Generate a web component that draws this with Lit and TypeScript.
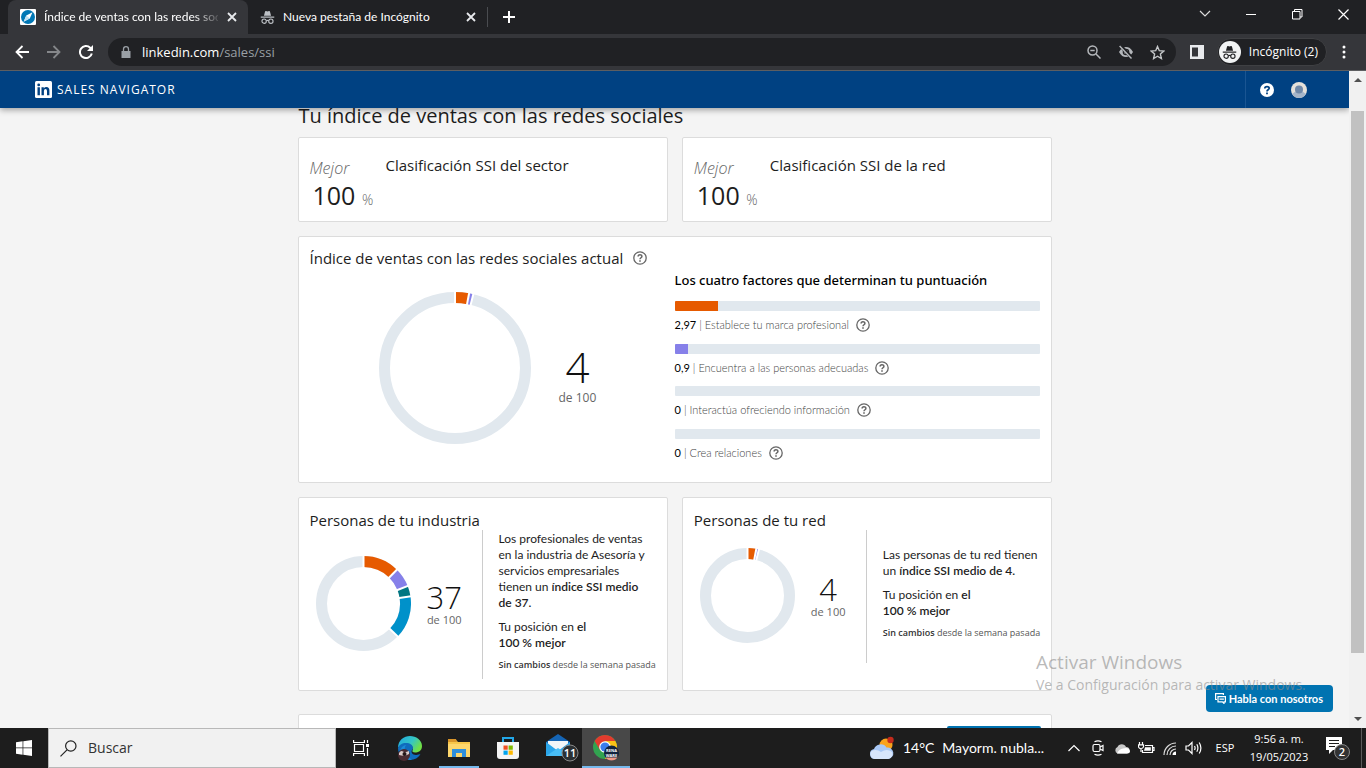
import { LitElement, html, svg, css, nothing } from "lit";
import { customElement, property } from "lit/decorators.js";
import { styleMap } from "lit/directives/style-map.js";

interface Segment {
  value: number;
  color: string;
}

const ORANGE = "#e65a00";
const PURPLE = "#8680e9";
const TEAL = "#007682";
const BLUE = "#0091ca";

/* Ring chart of coloured shares out of one hundred */
@customElement("ssi-ring")
export class SsiRing extends LitElement {
  @property({ type: Number }) size = 95;
  @property({ attribute: false }) segments: Segment[] = [];

  static styles = css`
    :host { display: block; flex: none; }
    svg { display: block; }
  `;

  render() {
    const c = this.size / 2;
    const r = c - 5.5;
    const at = (pct: number, radius: number) => {
      const a = (pct / 100) * Math.PI * 2;
      return [c + radius * Math.sin(a), c - radius * Math.cos(a)];
    };
    let start = 0;
    const bounds = [0];
    const arcs = this.segments.map((s) => {
      const [x1, y1] = at(start, r);
      const [x2, y2] = at(start + s.value, r);
      start += s.value;
      bounds.push(start);
      return svg`<path d="M${x1} ${y1}A${r} ${r} 0 0 1 ${x2} ${y2}" stroke=${s.color} stroke-width="11" fill="none"/>`;
    });
    return html`<svg width=${this.size} height=${this.size} role="img" aria-label="SSI">
      <circle cx=${c} cy=${c} r=${r} fill="none" stroke="#e1e8ee" stroke-width="11"/>
      ${arcs}
      ${bounds.map((b) => {
        const [x1, y1] = at(b, c - 13);
        const [x2, y2] = at(b, c + 1);
        return svg`<line x1=${x1} y1=${y1} x2=${x2} y2=${y2} stroke="#fff" stroke-width="2"/>`;
      })}
    </svg>`;
  }
}

const helpIcon = html`<svg width="14" height="14" viewBox="0 0 14 14" fill="none" stroke="#666" stroke-width="1.3" aria-hidden="true">
  <circle cx="7" cy="7" r="6.2"/><path d="M5.1 5.6C5.1 3.3 8.9 3.3 8.9 5.4 8.9 6.8 7 6.7 7 8.3" stroke-width="1.5"/><path d="M7 9.3v1.5" stroke-width="1.6"/></svg>`;

const closeIcon = html`<svg width="10" height="10" viewBox="0 0 10 10" stroke="#e8eaed" stroke-width="1.8"><path d="M1 1l8 8M9 1L1 9"/></svg>`;

const spy = (color: string, size: number) => html`<svg width=${size} height=${size} viewBox="0 0 16 16" fill="none" stroke=${color}>
  <path d="M4.2 6.2L5.4 1.6Q5.7.9 6.4 1.1L8 1.5 9.6 1.1Q10.3.9 10.6 1.6L11.8 6.2Z" fill=${color} stroke="none"/>
  <path d="M.8 7.6h14.4" stroke-width="1.3"/>
  <circle cx="4.4" cy="11.9" r="2.3" stroke-width="1.2"/><circle cx="11.6" cy="11.9" r="2.3" stroke-width="1.2"/>
  <path d="M6.7 11.5Q8 10.6 9.3 11.5" stroke-width="1.2"/></svg>`;

const factors = [
  { score: "2,97", value: 2.97, label: "Establece tu marca profesional", color: ORANGE },
  { score: "0,9", value: 0.9, label: "Encuentra a las personas adecuadas", color: PURPLE },
  { score: "0", value: 0, label: "Interactúa ofreciendo información", color: TEAL },
  { score: "0", value: 0, label: "Crea relaciones", color: BLUE },
];

@customElement("app-root")
export class AppRoot extends LitElement {
  static styles = css`
    :host {
      display: flex;
      flex-direction: column;
      height: 100vh;
      overflow: hidden;
      position: relative;
      font-family: "Open Sans", "Noto Sans", sans-serif;
      font-size: 12px;
      line-height: 16px;
      color: #1d1d1d;
    }
    * { box-sizing: border-box; }
    button { border: 0; background: none; padding: 0; margin: 0; font: inherit; color: inherit; display: grid; place-items: center; flex: none; }
    svg { display: block; flex: none; }
    h1, h2, h3, p { margin: 0; font-weight: 400; }
    b { font-weight: 600; }
    .light { font-weight: 300; }

    .tabs { height: 34px; flex: none; background: #202124; display: flex; padding-left: 8px; color: #fff; font-family: Lato, sans-serif; }
    .tab { width: 239px; display: flex; align-items: center; padding: 0 10px 0 12px; gap: 8px; }
    .tab.active { width: 240px; background: #35363a; border-radius: 8px 8px 0 0; }
    .tab-title { flex: 1; white-space: nowrap; overflow: hidden; }
    .tab.active .tab-title { -webkit-mask-image: linear-gradient(90deg, #000 150px, transparent 178px); mask-image: linear-gradient(90deg, #000 150px, transparent 178px); }
    .tab-close { width: 12px; height: 16px; }
    .tab-rule { width: 1px; height: 20px; align-self: center; background: #4a4c50; }
    .new-tab { width: 42px; }
    .win { margin-left: auto; display: flex; }
    .win button { width: 46px; height: 28px; }

    .toolbar { height: 37px; flex: none; background: #35363a; border-bottom: 1px solid #5d5e61; display: flex; align-items: center; padding: 0 5px 0 6px; color: #e8eaed; }
    .nav-btn { width: 32px; height: 28px; }
    .omni { flex: 1; height: 28px; border-radius: 14px; background: #202124; margin-left: 6px; display: flex; align-items: center; padding: 0 2px 0 12px; }
    .omni-text { flex: 1; font-size: 13px; padding-left: 10px; color: #9aa0a6; }
    .omni-text b { font-weight: 400; color: #fff; }
    .side { width: 41px; height: 28px; padding-left: 2px; }
    .private { display: flex; align-items: center; gap: 8px; height: 28px; border-radius: 14px; background: #202124; border: 1px solid #3f4043; padding: 0 8px 0 1px; color: #fff; }
    .disc { width: 22px; height: 22px; border-radius: 50%; background: #f1f3f4; display: grid; place-items: center; }
    .dots { width: 34px; height: 28px; }

    .view { flex: 1; min-height: 0; display: flex; }
    .page { flex: 1; min-width: 0; background: #f4f4f4; overflow: hidden; position: relative; }
    .brand { height: 37px; background: #004182; color: #fff; display: flex; align-items: center; padding-left: 35px; gap: 5px; position: relative; z-index: 1; box-shadow: 0 2px 6px rgba(0, 0, 0, 0.35); }
    .brand-name { letter-spacing: 1px; font-size: 12px; }
    .brand-end { margin-left: auto; height: 37px; border-left: 1px solid #1a5592; display: flex; align-items: center; padding: 0 42px 0 14px; gap: 17px; }

    .content { max-width: 754px; margin: -6px auto 0; display: grid; gap: 14px; }
    .title { font-size: 20px; line-height: 28px; padding-left: 1px; margin-bottom: -7px; }
    .pair { display: grid; grid-template-columns: 1fr 1fr; gap: 14px; }
    .card { background: #fff; border: 1px solid #dcdcdc; border-radius: 2px; }
    .h { font-size: 15px; line-height: 20px; }

    .rank { display: flex; padding: 17px 11px 8px; min-height: 85px; gap: 10px; }
    .best { width: 66px; flex: none; padding-top: 3px; }
    .best i { display: block; font-size: 16px; line-height: 21px; color: #666; }
    .best p { font-size: 25px; line-height: 32px; padding-left: 3px; white-space: nowrap; }
    .best small { font-size: 14px; line-height: 16px; color: #666; }

    .current { display: grid; grid-template-columns: 365px 1fr; padding: 11px 11px 11px; min-height: 247px; }
    .with-help { display: flex; align-items: center; gap: 10px; }
    .ring-row { display: flex; align-items: flex-end; padding: 24px 0 0 69px; gap: 28px; }
    .score { text-align: center; color: #666; font-size: 12px; line-height: 16px; }
    .score strong { display: block; font-weight: 300; font-size: 42px; line-height: 46px; color: #111; }
    .score.big { padding-bottom: 38px; }
    .score.mini { font-size: 11px; }
    .score.mini strong { font-size: 31px; line-height: 30px; }
    .factors { padding-top: 22px; display: grid; grid-template-rows: 31px 170px; }
    .factors h3 { font-family: "Noto Sans", sans-serif; font-size: 13px; line-height: 20px; font-weight: 500; color: #000; }
    .factor-list { display: grid; grid-auto-rows: 1fr; }
    .bar { height: 10px; border-radius: 1px; background: #e1e8ee; overflow: hidden; }
    .fill { height: 10px; }
    .factor { display: flex; align-items: center; padding-top: 6px; font-family: Lato, sans-serif; font-size: 11px; line-height: 16px; color: #444; white-space: pre; }
    .factor b { font-weight: 400; color: #000; }
    .factor button { margin-left: 7px; }

    .people { padding: 12px 11px 11px; min-height: 194px; display: grid; grid-template: 20px 1fr / 173px 1fr; }
    .people .h { grid-column: 1 / -1; }
    .people-left { display: flex; align-items: center; padding: 0 0 3px 6px; gap: 16px; border-right: 1px solid #ccc; }
    .people-left.short { margin-bottom: 16px; }
    .people-left .score { padding-top: 4px; }
    .say { padding: 0 0 8px 16px; display: grid; gap: 8px; align-content: center; font-family: Lato, sans-serif; }
    .say p { padding-right: 6px; }
    .say small { font-family: "Open Sans", sans-serif; font-size: 9px; line-height: 12px; color: #555; white-space: nowrap; }
    .say small b { color: #333; }
    .say.short { padding-bottom: 24px; }
    .say.short p { padding-right: 0; }
    .next { height: 60px; margin-top: 9px; padding: 11px 10px 0; display: flex; justify-content: flex-end; }
    .next button { width: 94px; height: 32px; border-radius: 2px; background: #0073b1; }

    .scroll { width: 17px; background: #f1f1f1; display: flex; flex-direction: column; align-items: center; justify-content: space-between; padding: 6px 0; }
    .thumb { width: 13px; flex: 1; background: #c1c1c1; margin: 29px 0 64px; }
    .chat { position: absolute; right: 16px; bottom: 16px; display: flex; align-items: center; gap: 3px; height: 27px; padding: 0 10px 0 9px; border-radius: 4px; background: #0073b1; color: #fff; font-family: Lato, sans-serif; font-size: 11px; font-weight: 700; z-index: 2; }
    .mark { position: absolute; right: 55px; bottom: 73px; width: 275px; color: rgba(140, 140, 140, 0.6); z-index: 3; white-space: nowrap; pointer-events: none; }
    .mark p { font-size: 14px; line-height: 20px; }
    .mark .lead { font-size: 19px; line-height: 26px; }

    .taskbar { height: 40px; flex: none; background: #1d1d1d; color: #fff; display: flex; align-items: stretch; }
    .taskbar button { width: 48px; height: 40px; }
    .search { width: 288px; border: 1px solid #b8b8b8; background: #f1f1f1; display: flex; align-items: center; padding-left: 11px; gap: 11px; }
    .search input { border: 0; background: none; outline: 0; flex: 1; min-width: 0; font: inherit; font-size: 14px; padding: 0; }
    .search input::placeholder { color: #333; opacity: 1; }
    .apps { display: flex; gap: 1px; padding-left: 1px; }
    .apps .open { border-bottom: 2px solid #76b9ed; width: 40px; margin: 0 4px; padding-top: 2px; }
    .apps .current-app { background: #484848; border-bottom: 2px solid #76b9ed; padding-top: 2px; }
    .tray { margin-left: auto; display: flex; align-items: center; }
    .taskbar .weather { width: auto; display: flex; gap: 8px; font-family: Lato, sans-serif; font-size: 14px; padding-right: 18px; }
    .taskbar .tray-btn { width: 24px; }
    .taskbar .lang { width: 38px; font-size: 11px; }
    .taskbar .clock { width: 70px; font-size: 11px; line-height: 18px; text-align: center; }
    .taskbar .notes { width: 48px; margin-right: 4px; border-right: 1px solid #5a5a5a; }
  `;

  private help(label: string) {
    return html`<button aria-label=${label}>${helpIcon}</button>`;
  }

  private rank(title: string) {
    return html`<section class="card rank">
      <div class="best"><i class="light">Mejor</i><p>100 <small class="light">%</small></p></div>
      <h2 class="h">${title}</h2>
    </section>`;
  }

  private browser() {
    return html`<header class="tabs">
      <div class="tab active">
        <svg width="16" height="16" viewBox="0 0 16 16"><rect width="16" height="16" rx="1" fill="#fff"/><circle cx="8" cy="8" r="7" fill="#0077b5"/><path d="M12.500 3.200L9.800 9.600 3.600 12.700 6.300 6.600Z" fill="#fff"/><path d="M6.300 6.600L9.800 9.600 3.600 12.700z" fill="#bfe0f2"/></svg>
        <span class="tab-title">Índice de ventas con las redes sociales</span>
        <button class="tab-close" aria-label="Cerrar">${closeIcon}</button>
      </div>
      <div class="tab">${spy("#bdc1c6", 15)}
        <span class="tab-title">Nueva pestaña de Incógnito</span>
        <button class="tab-close" aria-label="Cerrar">${closeIcon}</button>
      </div>
      <span class="tab-rule"></span>
      <button class="new-tab" aria-label="Nueva pestaña"><svg width="12" height="12" viewBox="0 0 12 12" stroke="#fff" stroke-width="2"><path d="M6 0v12M0 6h12"/></svg></button>
      <div class="win">
        <button aria-label="Buscar pestañas"><svg width="12" height="8" viewBox="0 0 12 8" fill="none" stroke="#ddd" stroke-width="1.2"><path d="M1 1l5 5 5-5"/></svg></button>
        <button aria-label="Minimizar"><svg width="10" height="10" viewBox="0 0 10 10" stroke="#fff"><path d="M0 5.5h10"/></svg></button>
        <button aria-label="Restaurar"><svg width="11" height="11" viewBox="0 0 11 11" fill="none" stroke="#fff"><path d="M.5 2.5h7.5v7.5h-7.5zM2.5 2.5v-2h7.500v7.500h-2"/></svg></button>
        <button aria-label="Cerrar ventana"><svg width="11" height="11" viewBox="0 0 11 11" stroke="#fff" stroke-width="1.200"><path d="M.5.5l10 10M10.500.5l-10 10"/></svg></button>
      </div>
    </header>
    <nav class="toolbar">
      <button class="nav-btn" aria-label="Atrás"><svg width="14" height="14" viewBox="0 0 14 14" fill="none" stroke="#fff" stroke-width="1.8"><path d="M14 7H1.500M7.500 1L1.500 7l6 6"/></svg></button>
      <button class="nav-btn" aria-label="Adelante"><svg width="14" height="14" viewBox="0 0 14 14" fill="none" stroke="#85878a" stroke-width="1.8"><path d="M0 7h12.500M6.500 1l6 6-6 6"/></svg></button>
      <button class="nav-btn" aria-label="Recargar"><svg width="14" height="14" viewBox="0 0 14 14" fill="none" stroke="#fff" stroke-width="2"><path d="M12.800 8.500A6 6 0 1 1 11.200 2.800L12 3.600"/><path d="M14 0v6H8z" fill="#fff" stroke="none"/></svg></button>
      <div class="omni">
        <svg width="12" height="12" viewBox="0 0 12 12"><path d="M1.500 5h9v7h-9z" fill="#9aa0a6"/><path d="M3.500 5V3.200a2.500 2.500 0 0 1 5 0V5" fill="none" stroke="#9aa0a6" stroke-width="1.300"/></svg>
        <span class="omni-text"><b>linkedin.com</b>/sales/ssi</span>
        <button class="nav-btn" aria-label="Zoom"><svg width="14" height="14" viewBox="0 0 14 14" fill="none" stroke="#b4b7bb" stroke-width="1.500"><circle cx="5.500" cy="5.500" r="4.500"/><path d="M9 9l4.500 4.500M3.300 5.500h4.400"/></svg></button>
        <button class="nav-btn" aria-label="Cookies bloqueadas"><svg width="16" height="14" viewBox="0 0 16 14"><path d="M1 7C3 3.300 5.400 2 8 2s5 1.300 7 5c-2 3.700-4.400 5-7 5S3 10.700 1 7z" fill="#b4b7bb"/><circle cx="8" cy="7" r="3.300" fill="#202124"/><circle cx="8" cy="7" r="2" fill="#b4b7bb"/><path d="M1.800 0L14 13" stroke="#202124" stroke-width="3.400"/><path d="M1.600 1L13.500 13.500" stroke="#b4b7bb" stroke-width="1.400"/></svg></button>
        <button class="nav-btn" aria-label="Favorito"><svg width="15" height="15" viewBox="0 0 15 15" fill="none" stroke="#c4c7c9" stroke-width="1.400"><path d="M7.500 1.500l1.800 4.200 4.500.4-3.400 3 1 4.400-3.900-2.300-3.900 2.300 1-4.400-3.400-3 4.500-.4z"/></svg></button>
      </div>
      <button class="side" aria-label="Panel lateral"><svg width="14" height="14" viewBox="0 0 14 14"><path d="M0 0h14v14H0zM2 2.500v9h6v-9z" fill="#e8eaed" fill-rule="evenodd"/></svg></button>
      <button class="private"><span class="disc">${spy("#202124", 15)}</span>Incógnito (2)</button>
      <button class="dots" aria-label="Menú"><svg width="4" height="14" viewBox="0 0 4 14" fill="#fff"><circle cx="2" cy="2" r="1.500"/><circle cx="2" cy="7" r="1.500"/><circle cx="2" cy="12" r="1.500"/></svg></button>
    </nav>`;
  }

  private taskbar() {
    return html`<footer class="taskbar">
      <button aria-label="Inicio"><svg width="16" height="16" viewBox="0 0 16 16" fill="#fff"><path d="M0 2.200L6.600 1.300V7.600H0zM7.300 1.200L16 0V7.600H7.300zM0 8.300h6.600v6.400L0 13.800zM7.300 8.300H16V16l-8.700-1.200z"/></svg></button>
      <label class="search"><svg width="17" height="17" viewBox="0 0 17 17" fill="none" stroke="#222" stroke-width="1.200"><circle cx="10.800" cy="6" r="5.200"/><path d="M7 9.800L.5 16.300"/></svg><input type="search" placeholder="Buscar" aria-label="Buscar"></label>
      <div class="apps">
        <button aria-label="Vista de tareas"><svg width="17" height="16" viewBox="0 0 17 16" fill="none" stroke="#fff" stroke-width="1.200"><path d="M1.500 4.500h9v7h-9zM.6 0v2.500h10.800V0M.6 16v-2.500h10.800V16M14.500 0v3M14.500 8v8"/><path d="M13 4h3v3h-3z" fill="#fff" stroke="none"/></svg></button>
        <button aria-label="Edge"><svg width="26" height="26" viewBox="0 0 26 26"><defs><linearGradient id="e1" x1="0" y1="0" x2="1" y2=".5"><stop offset="0" stop-color="#1fa7e0"/><stop offset=".6" stop-color="#35c6c5"/><stop offset="1" stop-color="#70e046"/></linearGradient></defs><path d="M1 13C1 5 7 1 13 1s12 4 12 10c0 5-4 6.500-7 6.500-2 0-3-.8-2.500-2C17 12 14 9 10 9c-4 0-8 2-9 4z" fill="url(#e1)"/><path d="M1 13c1-3 4-5 8-5 4 0 7 2 7 5 0 1-.8 1.500-1.200 2.500C14 17 15 20 19 20c2 0 3.500-.6 4.500-1.200C21.500 23 17.500 25 13 25 6 25 1 20 1 13z" fill="#0f6cbd"/><path d="M9 10c-3 4-1 12 6 14.500Q9 26 4.500 21 2 15 5 12q2-2 4-2z" fill="#1b8ad6"/><circle cx="7" cy="20" r="6" fill="#4a2c32"/><path d="M2 18q2-3 4-1.500T12 16v3q-4 3-10 1z" fill="#d8c8c6"/><circle cx="7.500" cy="19" r="2" fill="#241619"/></svg></button>
        <button class="open" aria-label="Explorador"><svg width="22" height="18" viewBox="0 0 22 18"><path d="M0 1h8l2 2h12v15H0z" fill="#f7c64a"/><path d="M0 0h8l1 3H0z" fill="#d9952a"/><path d="M0 5h22v13H0z" fill="#fdd66c"/><path d="M4 18v-8h14v8h-4v-4H8v4z" fill="#2f8fdc"/></svg></button>
        <button aria-label="Microsoft Store"><svg width="24" height="24" viewBox="0 0 24 24"><path d="M7 7V2h10v5" fill="none" stroke="#22a7e8" stroke-width="2"/><path d="M1 6h22v14q0 3-3 3H4q-3 0-3-3z" fill="#f4f4f4"/><path d="M7.500 9.500h4.200v4.200H7.500z" fill="#f25022"/><path d="M12.600 9.500h4.200v4.200h-4.200z" fill="#7fba00"/><path d="M7.500 14.600h4.200v4.200H7.500z" fill="#00a4ef"/><path d="M12.600 14.600h4.200v4.200h-4.200z" fill="#ffb900"/></svg></button>
        <button aria-label="Correo"><svg width="44" height="28" viewBox="-10 0 44 28"><path d="M1 8L13 0l12 8v14H1z" fill="#1565b5"/><path d="M3 7h20v6l-10 6L3 13z" fill="#f2f5f8"/><path d="M1 8l12 9L25 8v14H1z" fill="#2aa5ea"/><path d="M1 22l12-8 12 8z" fill="#48bdf5"/><circle cx="25" cy="19" r="8" fill="#2b3033" stroke="#888"/><text x="25" y="23" font-size="11" font-weight="600" fill="#fff" text-anchor="middle">11</text></svg></button>
        <button class="current-app" aria-label="Chrome"><svg width="28" height="28" viewBox="0 0 28 28"><circle cx="13" cy="13" r="12" fill="#32a350"/><path d="M2.600 7A12 12 0 0 1 23.400 7H13L8 16z" fill="#e33b2e"/><path d="M23.400 7A12 12 0 0 1 13 25l5-9-5-9z" fill="#fbc116"/><circle cx="13" cy="13" r="5.800" fill="#fff"/><circle cx="13" cy="13" r="4.600" fill="#3b7ded"/><circle cx="19.500" cy="19" r="7.500" fill="#12233f"/><path d="M13.500 23.500h12q-2 3-6 3t-6-3z" fill="#f19a86"/><text x="19.500" y="18" font-size="4" font-weight="700" fill="#fff" text-anchor="middle">RENA</text><text x="19.500" y="23" font-size="4" font-weight="700" fill="#fff" text-anchor="middle">WARE</text></svg></button>
      </div>
      <div class="tray">
        <button class="weather"><svg width="26" height="24" viewBox="0 0 26 24"><circle cx="17" cy="9" r="6.500" fill="#f9a21b"/><circle cx="21.500" cy="4" r="3.200" fill="#c42b1c"/><path d="M6 23a5 5 0 0 1-1-9.900 7 7 0 0 1 12.500-1.600A5.800 5.800 0 0 1 19.500 23z" fill="#a9c8f5"/><path d="M6 23a5 5 0 0 1-4-7.500q5-3 10 .5 6-4 11 0a5 5 0 0 1-4 7z" fill="#d7e5fb"/></svg><span>14°C</span><span>Mayorm. nubla...</span></button>
        <button class="tray-btn" aria-label="Iconos ocultos"><svg width="12" height="8" viewBox="0 0 12 8" fill="none" stroke="#fff" stroke-width="1.200"><path d="M.5 7L6 1.500 11.500 7"/></svg></button>
        <button class="tray-btn" aria-label="Cámara"><svg width="13" height="16" viewBox="0 0 13 16" fill="none" stroke="#fff" stroke-width="1.200"><rect x="1" y="4.500" width="7" height="7" rx="1.500"/><path d="M8 7l3-1.500v5L8 9M2.500 1.800Q6 0 9.500 1.800M2.500 14.200Q6 16 9.500 14.200"/></svg></button>
        <button class="tray-btn" aria-label="OneDrive"><svg width="16" height="11" viewBox="0 0 16 11"><path d="M3.500 10.500a3.500 3.500 0 0 1 0-6.500 4.600 4.600 0 0 1 8.500 0 3.300 3.300 0 0 1 1 6.500z" fill="#c8c8c8"/><path d="M3 10.500Q5 6 9 5.500 15 4 16 8q0 2.500-3 2.500z" fill="#fff"/></svg></button>
        <button class="tray-btn" aria-label="Batería"><svg width="17" height="13" viewBox="0 0 17 13" fill="none" stroke="#fff" stroke-width="1.200"><path d="M7 3.500H14.500v7H4.500V8M14.500 5.500h1.500v3h-1.500"/><path d="M7 5.300h5.800v3.500H6z" fill="#fff" stroke="none"/><path d="M1.500 0v2.500M4.500 0v2.500M.5 2.800h5v2Q5 6.500 3 6.500T.5 4.800zM3 6.500V10"/></svg></button>
        <button class="tray-btn" aria-label="Wi-Fi"><svg width="14" height="13" viewBox="0 0 14 13" fill="none" stroke="#ddd" stroke-width="1.200"><path d="M1 13A12 12 0 0 1 13 1M4 13a9 9 0 0 1 9-9M7 13a6 6 0 0 1 6-6"/><path d="M9.500 13A3.500 3.500 0 0 1 13 9.500V13z" fill="#fff" stroke="none"/></svg></button>
        <button class="tray-btn" aria-label="Volumen"><svg width="18" height="14" viewBox="0 0 18 14" fill="none" stroke="#fff" stroke-width="1.200"><path d="M1 5h2.500L7 1.500v11L3.500 9H1zM9.500 5q1.200 2 0 4M11.800 3.300q2.200 3.700 0 7.400M14.200 1.500q3.400 5.500 0 11"/></svg></button>
        <button class="lang">ESP</button>
        <button class="clock"><span>9:56 a. m.<br>19/05/2023</span></button>
        <button class="notes" aria-label="Notificaciones"><svg width="26" height="26" viewBox="0 0 26 26"><path d="M1 2h16v13H8l-4 4v-4H1z" fill="#fff"/><path d="M4 5.500h10M4 8.500h10M4 11.500h6" stroke="#1d1d1d"/><circle cx="17" cy="17" r="7.500" fill="#333" stroke="#888"/><text x="17" y="21" font-size="11" font-weight="600" fill="#fff" text-anchor="middle">2</text></svg></button>
      </div>
    </footer>`;
  }

  private people(title: string, score: number, segments: Segment[], short: boolean, intro: unknown) {
    const s = short ? "short" : "";
    return html`<section class="card people">
      <h2 class="h">${title}</h2>
      <div class="people-left ${s}">
        <ssi-ring .size=${95} .segments=${segments}></ssi-ring>
        <p class="score mini"><strong>${score}</strong>de 100</p>
      </div>
      <div class="say ${s}">
        <p>${intro}</p>
        <p>Tu posición en <b>el<br>100 % mejor</b></p>
        <small><b>Sin cambios</b> desde la semana pasada</small>
      </div>
    </section>`;
  }

  render() {
    const own = [{ value: 2.97, color: ORANGE }, { value: 0.9, color: PURPLE }];
    const industry = [
      { value: 12.4, color: ORANGE },
      { value: 6.6, color: PURPLE },
      { value: 3.6, color: TEAL },
      { value: 14.6, color: BLUE },
    ];
    return html`${this.browser()}
      <div class="view">
        <div class="page">
          <header class="brand">
            <svg width="17" height="17" viewBox="0 0 17 17"><rect width="17" height="17" rx="1.500" fill="#fff"/><g fill="#004182"><path d="M2.500 6.300h2.400v8H2.500zM6.500 6.300h2.300v1.200Q9.600 6.100 11.400 6.100q3 0 3 3.600v4.600H12V10q0-1.900-1.500-1.900T8.900 10v4.300H6.500z"/><circle cx="3.700" cy="3.900" r="1.400"/></g></svg>
            <span class="brand-name">SALES NAVIGATOR</span>
            <div class="brand-end">
              <button aria-label="Ayuda"><svg width="14" height="14" viewBox="0 0 14 14" fill="none" stroke="#004182"><circle cx="7" cy="7" r="7" fill="#fff" stroke="none"/><path d="M4.800 5.500C4.800 3 9.200 3 9.200 5.300 9.200 6.800 7 6.700 7 8.400" stroke-width="1.700"/><path d="M7 9.400v1.800" stroke-width="1.800"/></svg></button>
              <button aria-label="Perfil"><svg width="16" height="16" viewBox="0 0 16 16"><circle cx="8" cy="8" r="8" fill="#e5e1da"/><path d="M1 12q3-3 7-3t7 3q-2.500 4-7 4t-7-4z" fill="#a5b5c9"/><circle cx="8" cy="7.500" r="4" fill="#6f88a8"/></svg></button>
            </div>
          </header>
          <main class="content">
            <h1 class="title">Tu índice de ventas con las redes sociales</h1>
            <div class="pair">${this.rank("Clasificación SSI del sector")}${this.rank("Clasificación SSI de la red")}</div>
            <section class="card current">
              <div>
                <div class="with-help"><h2 class="h">Índice de ventas con las redes sociales actual</h2>${this.help("Más información")}</div>
                <div class="ring-row">
                  <ssi-ring .size=${152} .segments=${own}></ssi-ring>
                  <p class="score big"><strong>4</strong>de 100</p>
                </div>
              </div>
              <div class="factors">
                <h3>Los cuatro factores que determinan tu puntuación</h3>
                <div class="factor-list">
                  ${factors.map((f) => html`<div>
                    <div class="bar">${f.value ? html`<div class="fill" style=${styleMap({ width: `${f.value * 4}%`, background: f.color })}></div>` : nothing}</div>
                    <div class="factor"><b>${f.score}</b><span class="light"> | ${f.label}</span>${this.help(f.label)}</div>
                  </div>`)}
                </div>
              </div>
            </section>
            <div class="pair">
              ${this.people("Personas de tu industria", 37, industry, false, html`Los profesionales de ventas en la industria de Asesoría y servicios empresariales tienen un <b>índice SSI medio de 37.</b>`)}
              ${this.people("Personas de tu red", 4, own, true, html`Las personas de tu red tienen un <b>índice SSI medio de 4.</b>`)}
            </div>
            <section class="card next"><button aria-label="Más información"></button></section>
          </main>
          <button class="chat"><svg width="11" height="11" viewBox="0 0 11 11" fill="none" stroke="#fff" stroke-width="1.200"><path d="M2 6.500H.6V.6h7.800V2M3 3.600h7.400v5.200H9V10.400L7.400 8.800H3zM4.500 6.200h4.400"/></svg>Habla con nosotros</button>
        </div>
        <div class="scroll">
          <svg width="8" height="5" viewBox="0 0 8 5" fill="#505050"><path d="M0 5l4-4 4 4z"/></svg>
          <span class="thumb"></span>
          <svg width="8" height="5" viewBox="0 0 8 5" fill="#505050"><path d="M0 0l4 4 4-4z"/></svg>
        </div>
      </div>
      ${this.taskbar()}
      <div class="mark"><p class="lead">Activar Windows</p><p>Ve a Configuración para activar Windows.</p></div>`;
  }
}
